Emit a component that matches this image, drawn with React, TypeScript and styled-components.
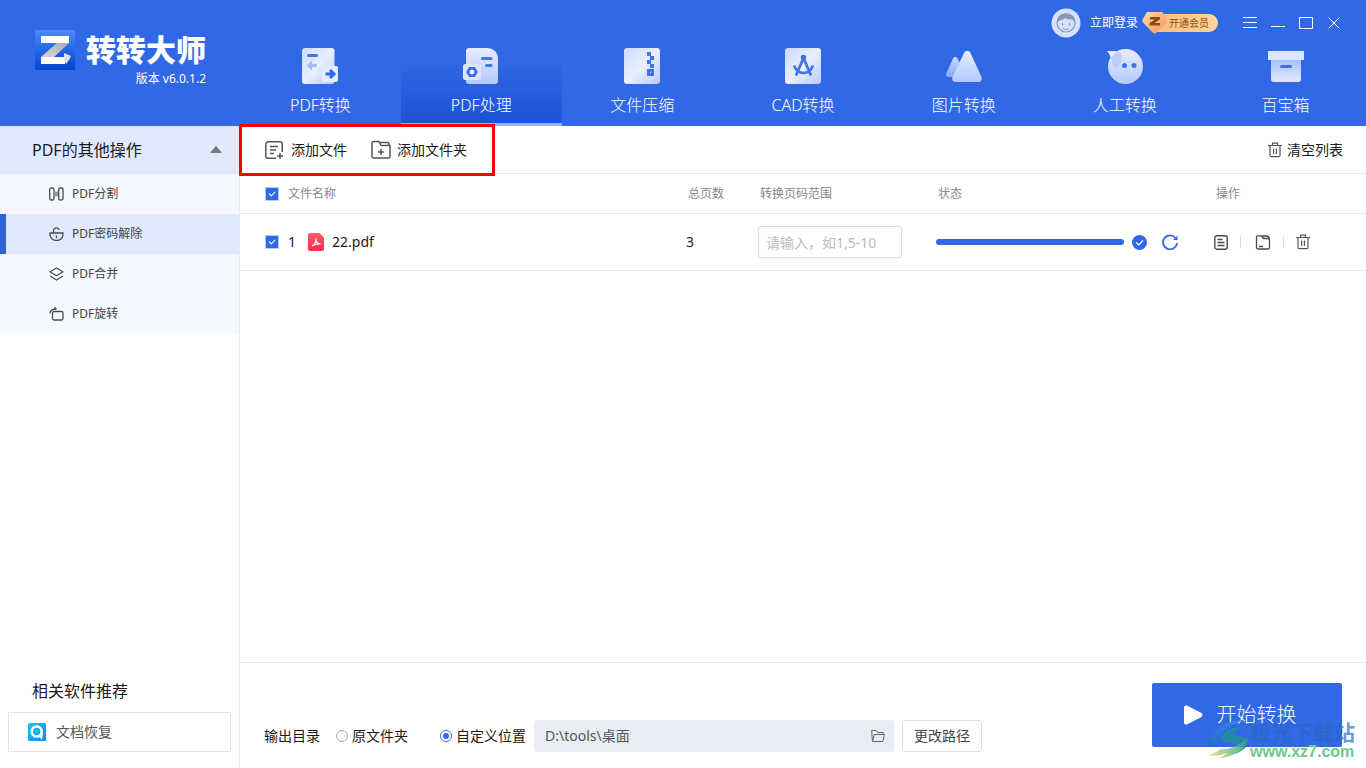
import React, { useState } from "react";
import styled, { createGlobalStyle, css } from "styled-components";

const blue = "#3168e6";
const pale = "#e1e9ff";
const line = "#e4e6ea";
const ink = "#1a1a1a";
const soft = "#555";

const GlobalStyle = createGlobalStyle`
  *, *::before, *::after { box-sizing: border-box; }
  body { margin: 0; background: #fff; }
  body, button, input {
    font-family: "Noto Sans", "Noto Sans CJK SC", sans-serif;
    font-size: 14px;
    line-height: 20px;
    color: ${ink};
  }
  button { padding: 0; border: 0; background: none; cursor: pointer; }
  svg { display: block; flex: none; }
`;

const Page = styled.div`
  position: relative;
  display: flex;
  flex-direction: column;
  min-height: 100vh;
`;

/* Header */
const Header = styled.header`
  display: flex;
  background: ${blue};
  color: #fff;
`;
const Brand = styled.div`
  display: flex;
  flex: none;
  gap: 11px;
  width: 240px;
  padding: 30px 0 0 35px;
`;
const BrandText = styled.div`
  display: flex;
  flex-direction: column;
  align-items: flex-end;
  gap: 5px;
`;
const BrandName = styled.h1`
  margin: 0;
  font-family: "Noto Sans CJK SC", sans-serif;
  font-size: 30px;
  font-weight: 900;
  line-height: 36px;
`;
const Version = styled.span`
  font-size: 12px;
  line-height: 16px;
`;
const HeaderMain = styled.div`
  flex: 1;
  min-width: 0;
`;
const TitleBar = styled.div`
  display: flex;
  align-items: center;
  justify-content: flex-end;
  height: 46px;
  padding-right: 18px;
`;
const Login = styled.button`
  display: flex;
  align-items: center;
  gap: 9px;
  color: #fff;
  font-size: 12px;
`;
const Vip = styled.button`
  display: flex;
  align-items: center;
  margin: 0 18px 0 4px;
  color: #8a4f12;
  font-size: 10px;
`;
const VipLabel = styled.span`
  height: 18px;
  margin-left: -14px;
  padding: 0 9px 0 16px;
  border-radius: 0 9px 9px 0;
  background: linear-gradient(90deg, #f8b978, #ffd79c);
  line-height: 18px;
`;
const WindowButton = styled.button`
  display: grid;
  place-items: center;
  width: 28px;
  height: 28px;
`;
const Nav = styled.nav`
  display: grid;
  grid-template-columns: repeat(7, 1fr);
  height: 80px;
`;
const NavItem = styled.a<{ $active?: boolean }>`
  display: flex;
  flex-direction: column;
  align-items: center;
  gap: 9px;
  padding-top: 2px;
  color: #fff;
  font-size: 16px;
  font-weight: 300;
  line-height: 24px;
  text-decoration: none;
  ${(p) =>
    p.$active &&
    css`
      border-bottom: 3px solid #8fb1f8;
      background: linear-gradient(180deg, ${blue} 12px, #1d52d8 100%);
    `}
`;

/* Sidebar */
const Body = styled.div`
  display: flex;
  flex: 1;
`;
const Sidebar = styled.aside`
  display: flex;
  flex: none;
  flex-direction: column;
  width: 240px;
  border-right: 1px solid ${pale};
`;
const GroupHead = styled.button`
  display: flex;
  align-items: center;
  justify-content: space-between;
  height: 48px;
  padding: 0 17px 0 32px;
  background: ${pale};
  font-size: 16px;
`;
const SideLink = styled.a<{ $active?: boolean }>`
  display: flex;
  align-items: center;
  gap: 8px;
  height: 40px;
  padding-left: 43px;
  border-left: 6px solid ${(p) => (p.$active ? "#2f62d9" : "#f5f8ff")};
  background: ${(p) => (p.$active ? pale : "#f5f8ff")};
  color: #444;
  font-size: 12px;
  text-decoration: none;
`;
const Related = styled.section`
  margin-top: auto;
  padding: 0 8px 16px;
`;
const RelatedTitle = styled.h2`
  margin: 0 0 9px;
  padding-left: 24px;
  font-size: 16px;
  font-weight: 400;
  line-height: 24px;
`;
const RelatedLink = styled.a`
  display: flex;
  align-items: center;
  gap: 10px;
  height: 40px;
  padding-left: 19px;
  border: 1px solid #e1e1e1;
  color: ${soft};
  text-decoration: none;
`;

/* Main area */
const Main = styled.main`
  display: flex;
  flex: 1;
  flex-direction: column;
  min-width: 0;
`;
const Toolbar = styled.div`
  position: relative;
  display: flex;
  align-items: center;
  gap: 24px;
  height: 48px;
  padding: 0 23px 0 25px;
  border-bottom: 1px solid #dfe7f6;
`;
const ToolButton = styled.button<{ $end?: boolean }>`
  display: flex;
  align-items: center;
  gap: ${(p) => (p.$end ? 5 : 6)}px;
  margin-left: ${(p) => (p.$end ? "auto" : 0)};
`;
const Highlight = styled.div`
  position: absolute;
  top: -2px;
  left: -1px;
  width: 256px;
  height: 52px;
  border: 3px solid #fe0000;
  pointer-events: none;
`;
const Table = styled.table`
  width: 100%;
  border-collapse: separate;
  border-spacing: 0;
  table-layout: fixed;
`;
const Th = styled.th<{ $width?: number }>`
  width: ${(p) => (p.$width ? `${p.$width}px` : "auto")};
  height: 40px;
  padding: 0 0 0 2px;
  border-bottom: 1px solid #e6e8ec;
  color: #888;
  font-size: 12px;
  font-weight: 400;
  text-align: left;
`;
const Td = styled.td`
  height: 57px;
  padding: 0;
  border-bottom: 1px solid #e6e8ec;
`;
const NameCell = styled.div<{ $head?: boolean }>`
  display: flex;
  align-items: center;
  padding-left: ${(p) => (p.$head ? 23 : 25)}px;
`;
const Tick = styled.input`
  appearance: none;
  display: grid;
  place-items: center;
  width: 14px;
  height: 14px;
  margin: 0 9px 0 0;
  border: 1px solid #b7cbf8;
  background: #fff;
  &:checked { background: ${blue}; }
  &:checked::after {
    content: "";
    width: 6px;
    height: 4px;
    margin-bottom: 2px;
    border: solid #fff;
    border-width: 0 0 1px 1px;
    transform: rotate(-45deg);
  }
`;
const FileNumber = styled.span`
  width: 20px;
`;
const FileName = styled.span`
  margin-left: 8px;
`;
const RangeInput = styled.input`
  display: block;
  width: 144px;
  height: 32px;
  padding: 0 7px;
  border: 1px solid #dcdee3;
  border-radius: 3px;
  &::placeholder { color: #b9bcc4; opacity: 1; }
`;
const Status = styled.div`
  display: flex;
  align-items: center;
`;
const Progress = styled.div`
  width: 188px;
  height: 6px;
  margin-right: 8px;
  border-radius: 3px;
  background: ${blue};
`;
const IconButton = styled.button`
  display: grid;
  place-items: center;
`;
const Retry = styled(IconButton)`
  margin-left: 15px;
`;
const Actions = styled.div`
  display: flex;
  align-items: center;
  gap: 12px;
`;
const Divider = styled.span`
  width: 1px;
  height: 12px;
  background: #dcdcdc;
`;

/* Footer */
const Footer = styled.footer`
  display: flex;
  align-items: flex-end;
  justify-content: space-between;
  gap: 16px;
  margin-top: auto;
  height: 106px;
  padding: 0 24px 16px;
  border-top: 1px solid ${line};
`;
const Output = styled.div`
  display: flex;
  flex: 1;
  align-items: center;
  min-width: 0;
  white-space: nowrap;
`;
const RadioLabel = styled.label<{ $gap: number }>`
  display: flex;
  align-items: center;
  gap: 4px;
  margin-left: ${(p) => p.$gap}px;
`;
const Radio = styled.input`
  appearance: none;
  display: grid;
  place-items: center;
  width: 12px;
  height: 12px;
  margin: 0;
  border: 1px solid #a9a9a9;
  border-radius: 50%;
  &:checked { border-color: ${blue}; }
  &:checked::after {
    content: "";
    width: 6px;
    height: 6px;
    border-radius: 50%;
    background: ${blue};
  }
`;
const PathField = styled.div`
  display: flex;
  flex: 0 1 360px;
  align-items: center;
  min-width: 0;
  height: 32px;
  margin: 0 8px;
  padding: 0 9px 0 11px;
  border-radius: 4px;
  background: #e9edf5;
`;
const PathInput = styled.input`
  flex: 1;
  min-width: 0;
  padding: 0;
  border: 0;
  background: none;
  color: ${soft};
`;
const ChangeButton = styled.button`
  width: 80px;
  height: 32px;
  border: 1px solid #dcdee3;
  border-radius: 3px;
  color: #444;
`;
const StartButton = styled.button`
  display: flex;
  flex: none;
  align-items: center;
  justify-content: center;
  gap: 14px;
  width: 190px;
  height: 64px;
  margin-bottom: 5px;
  padding-right: 14px;
  border-radius: 2px;
  background: ${blue};
  color: #fff;
  font-size: 20px;
  font-weight: 300;
  line-height: 28px;
`;
const Watermark = styled.div`
  position: absolute;
  right: 11px;
  bottom: 7px;
  display: flex;
  pointer-events: none;
`;
const WatermarkText = styled.div`
  display: flex;
  flex-direction: column;
  color: rgba(36, 104, 190, 0.68);
  font-family: "Noto Sans CJK SC", sans-serif;
  font-size: 21px;
  font-weight: 700;
  line-height: 24px;
`;
const WatermarkSite = styled.span`
  color: #6cc98b;
  font-family: "Liberation Sans", sans-serif;
  font-size: 16px;
  line-height: 18px;
`;

/* Drawings */
const Gradients = () => (
  <svg width="0" height="0" style={{ position: "absolute" }} aria-hidden="true">
    <defs>
      <linearGradient id="sheet" x1="0" y1="0" x2="1" y2="1">
        <stop offset="0" stopColor="#cddafc" />
        <stop offset=".5" stopColor="#e9efff" />
        <stop offset="1" stopColor="#b9cafa" />
      </linearGradient>
      <linearGradient id="drop" x1="0" y1="0" x2="0" y2="1">
        <stop offset="0" stopColor="#e6edff" />
        <stop offset="1" stopColor="#b4c8fc" />
      </linearGradient>
      <linearGradient id="rise" x1="0" y1="0" x2="0" y2="1">
        <stop offset="0" stopColor="#a4befa" />
        <stop offset="1" stopColor="#e2eaff" />
      </linearGradient>
      <linearGradient id="shade" x1="0" y1="0" x2="0" y2="1">
        <stop offset="0" stopColor="#c8d7fe" />
        <stop offset="1" stopColor="#86a8f6" />
      </linearGradient>
      <linearGradient id="logo" x1="0" y1="0" x2="0" y2="1">
        <stop offset="0" stopColor="#4d89fb" />
        <stop offset=".5" stopColor="#2168e8" />
        <stop offset="1" stopColor="#0646cc" />
      </linearGradient>
      <linearGradient id="fold" x1="1" y1="0" x2="0" y2="1">
        <stop offset="0" stopColor="#aaaeb5" />
        <stop offset="1" stopColor="#d6d6d8" />
      </linearGradient>
      <linearGradient id="gem" x1="0" y1="0" x2="1" y2="1">
        <stop offset="0" stopColor="#ffdfa8" />
        <stop offset="1" stopColor="#f88d55" />
      </linearGradient>
      <linearGradient id="pdf" x1="0" y1="0" x2="0" y2="1">
        <stop offset="0" stopColor="#ff5a6b" />
        <stop offset="1" stopColor="#fb2b4c" />
      </linearGradient>
      <linearGradient id="recover" x1="0" y1="0" x2="1" y2="1">
        <stop offset="0" stopColor="#18c8f8" />
        <stop offset="1" stopColor="#0a86f4" />
      </linearGradient>
      <linearGradient id="swirl" x1="0" y1="1" x2="1" y2="0">
        <stop offset="0" stopColor="#1d6fc4" />
        <stop offset="1" stopColor="#3f8fe6" />
      </linearGradient>
      <linearGradient id="swoosh" x1="0" y1="0" x2="1" y2="0">
        <stop offset="0" stopColor="#efe06a" />
        <stop offset=".5" stopColor="#8cc97c" />
        <stop offset="1" stopColor="#2b9f86" />
      </linearGradient>
    </defs>
  </svg>
);

const Logo = () => (
  <svg width="40" height="40" viewBox="0 0 40 40">
    <rect width="40" height="40" rx="1" fill="url(#logo)" />
    <path d="M6 6h28v7H6z" fill="#fff" />
    <path d="M22 13h12L19 27H6z" fill="url(#fold)" />
    <path d="M6 27h24v7H6z" fill="#fff" />
    <path d="M29 23l7 3-2 4-3 4-2-4z" fill="#dcdfe6" />
  </svg>
);

const NavIcon = ({ kind }: { kind: string }) => (
  <svg width="36" height="36" viewBox="0 0 36 36" fill="none">
    {kind === "convert" && (
      <>
        <rect width="32.500" height="36" rx="3" fill="url(#sheet)" />
        <path d="M6.500 7.500h8" stroke="#4175ea" strokeWidth="3" strokeLinecap="round" />
        <path d="M4.500 17.500l5.500-5v3.500h5v3h-5v3.500z" fill="#a3bcf7" />
        <rect x="20" y="18" width="16" height="16" rx="2" fill="#e4edff" />
        <path d="M23.500 26h8M28 22l4 4-4 4" stroke="#3469e6" strokeWidth="3" />
      </>
    )}
    {kind === "process" && (
      <>
        <path d="M6 0h18c7 0 11 5 11 11v22c0 2-1 3-3 3H6c-2 0-3-1-3-3V3c0-2 1-3 3-3z" fill="url(#drop)" />
        <path d="M19.500 10.500h8.500M23.500 17.500h4.500" stroke="#4175ea" strokeWidth="3" strokeLinecap="round" />
        <rect x="0" y="16" width="18" height="16" rx="2" fill="#dce7ff" />
        <path d="M6 19h6l3 5-3 5H6l-3-5z" fill="#3f72e9" />
        <circle cx="9" cy="24" r="2.200" fill="#fff" />
      </>
    )}
    {kind === "zip" && (
      <>
        <rect width="36" height="36" rx="3" fill="url(#sheet)" />
        <path d="M23 4h4v4h-4zM26 8h4v4h-4zM23 12h4v4h-4zM26 16h4v4h-4z" fill="#4173e8" />
        <path d="M24.500 22.500h4v4h-4z" stroke="#4173e8" strokeWidth="3" />
      </>
    )}
    {kind === "cad" && (
      <>
        <rect width="36" height="36" rx="3" fill="url(#sheet)" />
        <circle cx="18.500" cy="9.500" r="2.700" fill="#4173e8" />
        <path d="M18.500 10L11 27.500M18.500 10L26 27.500M9 17.500c2 5 5 7.500 9.500 7.500s7.500-2.500 9.500-7.500" stroke="#4173e8" strokeWidth="2.700" />
      </>
    )}
    {kind === "image" && (
      <>
        <path d="M.5 25L7 10.500c1-2 3.500-2 4.500 0l3 6L7 29H3c-3 0-3.500-2-2.500-4z" fill="url(#shade)" />
        <path d="M6.500 29L18 5c1.500-3 5-3 6.500 0L35.500 29c1 3-.5 5-3 5h-23c-2.500 0-4-2-3-5z" fill="url(#drop)" />
      </>
    )}
    {kind === "human" && (
      <>
        <circle cx="18.500" cy="18.500" r="17.500" fill="url(#drop)" />
        <path d="M0 3c4 1 8-1 12 1 5 2 2 12-1 15-2 2-4 1-5-1-2-6-1-10-6-15z" fill="#bdcefb" />
        <path d="M0 3c4 1 7 0 11 1-4 1-6 4-7 6-1-3-2-5-4-7z" fill="#e8eeff" />
        <circle cx="17.500" cy="17.500" r="2.500" fill="#3f72e9" />
        <circle cx="27" cy="17.500" r="2.500" fill="#3f72e9" />
      </>
    )}
    {kind === "box" && (
      <>
        <path d="M3 11h30v20c0 2-1 3-3 3H6c-2 0-3-1-3-3z" fill="url(#rise)" />
        <path d="M0 3h36v9H0z" fill="#dae5ff" />
        <path d="M13.500 18.500h9" stroke="#3b70e8" strokeWidth="3" strokeLinecap="round" />
      </>
    )}
  </svg>
);

const SideIcon = ({ kind }: { kind: string }) => (
  <svg width="15" height="14" viewBox="0 0 15 14" fill="none" stroke="#4c4c4c" strokeWidth="1.300" strokeLinejoin="round">
    {kind === "split" && (
      <>
        <rect x=".7" y="1" width="4.300" height="12" rx="1.500" />
        <rect x="9.700" y="1" width="4.300" height="12" rx="1.500" />
        <path d="M5.600 4l1.700 1 1.800-1v6l-1.800-1-1.700 1z" fill="#999" stroke="none" />
      </>
    )}
    {kind === "unlock" && (
      <path d="M1 6h13v1.500c0 3-2.500 6-6.500 6S1 10.500 1 7.500zM4.500 6V3.800a3 3 0 0 1 5.800-1M7.500 8.500V11" />
    )}
    {kind === "merge" && <path d="M7.500 1L14 4.800 7.500 8.700 1 4.800zM1 9l6.500 4L14 9" />}
    {kind === "rotate" && (
      <>
        <rect x="3.500" y="4.500" width="10.500" height="8.500" rx="1.500" />
        <path d="M1 6.500C1 3 3 2 7.500 2M5.500.3L7.500 2" />
      </>
    )}
  </svg>
);

const AddFileIcon = () => (
  <svg width="20" height="20" viewBox="1 0 20 20" fill="none" stroke="#555" strokeWidth="1.500">
    <path d="M12 18.200H4A2.200 2.200 0 0 1 1.800 16V4A2.200 2.200 0 0 1 4 1.800h12A2.200 2.200 0 0 1 18.200 4v8M6 6.500h8M6 10h6M6 13.500h4M16 13v6M13 16h6" />
  </svg>
);
const AddFolderIcon = () => (
  <svg width="20" height="20" viewBox="0 0 20 20" fill="none" stroke="#555" strokeWidth="1.500" strokeLinejoin="round">
    <path d="M1 3c0-1 .5-1.500 1.500-1.500H8L10 5.500h9v11c0 1-.5 1.500-1.500 1.500h-15C1.500 18 1 17.500 1 16.500zM8.500 2.500h8c1 0 1.500.5 1.500 1.500v1.500M10 9v6M7 12h6" />
  </svg>
);
const TrashIcon = () => (
  <svg width="14" height="16" viewBox="0 0 14 16" fill="none" stroke="#555" strokeWidth="1.200">
    <path d="M0 3.500h14M4.500 3.300V1.200h5v2.100M2 3.500v10c0 .8.500 1.200 1.200 1.200h7.600c.7 0 1.200-.4 1.200-1.200v-10M5.600 6.500V12M8.400 6.500V12" />
  </svg>
);
const PdfIcon = () => (
  <svg width="16" height="18" viewBox="0 0 16 18">
    <path d="M2 0h9.500L16 4.500V16a2 2 0 0 1-2 2H2a2 2 0 0 1-2-2V2a2 2 0 0 1 2-2z" fill="url(#pdf)" />
    <path d="M4 12.800c2-.5 4-3.300 4-7.300M7.800 6c0 3 2 4.500 4.700 5.200-3-.6-5.500 0-8.500 1.600" stroke="#fff" strokeWidth="1.200" fill="none" />
  </svg>
);

const navItems = [
  ["convert", "PDF转换"],
  ["process", "PDF处理"],
  ["zip", "文件压缩"],
  ["cad", "CAD转换"],
  ["image", "图片转换"],
  ["human", "人工转换"],
  ["box", "百宝箱"],
];
const sideItems = [
  ["split", "PDF分割"],
  ["unlock", "PDF密码解除"],
  ["merge", "PDF合并"],
  ["rotate", "PDF旋转"],
];
const windowButtons = [
  ["菜单", "M0 1.500h14M0 6.500h14M0 11.500h14"],
  ["最小化", "M0 10.500h14"],
  ["最大化", "M.5 1.500h13v11H.5z"],
  ["关闭", "M1.500 1.500l11 11M12.500 1.500l-11 11"],
];

export default function App() {
  const [custom, setCustom] = useState(true);
  return (
    <Page>
      <GlobalStyle />
      <Gradients />
      <Header>
        <Brand>
          <Logo />
          <BrandText>
            <BrandName>转转大师</BrandName>
            <Version>版本 v6.0.1.2</Version>
          </BrandText>
        </Brand>
        <HeaderMain>
          <TitleBar>
            <Login>
              <svg width="30" height="30" viewBox="0 0 30 30" fill="none">
                <circle cx="15" cy="15" r="14.500" fill="#d5e2ff" />
                <circle cx="15" cy="15" r="9" stroke="#8998b8" strokeWidth="1.200" />
                <path d="M6 15c-1-6 4-10 9-9.500 6-.5 10 4 9 9.500-1-2-2-3-3-3.500-3 0-5-.5-7-1.500-2 2-5 2-6 3-1 .5-1.500 1-2 2z" fill="#8998b8" />
                <path d="M11.500 15v2.500M18.500 15v2.500" stroke="#8998b8" strokeWidth="1.300" />
                <path d="M12 20.500c2 1.500 4 1.500 6 0" stroke="#8998b8" />
              </svg>
              立即登录
            </Login>
            <Vip>
              <svg width="25" height="22" viewBox="0 0 25 22" style={{ zIndex: 1 }}>
                <path d="M6 0h13c1 0 2 .5 2.500 1.500l3 7c.5 1 0 2-.7 2.700L14 21c-1 1-2 1-3 0L1 10.500C.3 9.500.2 8.500.7 7.500L4 1.500C4.500.5 5 0 6 0z" fill="url(#gem)" />
                <path d="M8 5h10v2.300L12.500 11H18v2.500H7.500V11L13 7.500H8z" fill="#8a4a14" />
              </svg>
              <VipLabel>开通会员</VipLabel>
            </Vip>
            {windowButtons.map(([label, d]) => (
              <WindowButton key={label} aria-label={label}>
                <svg width="14" height="14" viewBox="0 0 14 14" fill="none" stroke="#fff">
                  <path d={d} />
                </svg>
              </WindowButton>
            ))}
          </TitleBar>
          <Nav>
            {navItems.map(([kind, label]) => (
              <NavItem key={kind} href={`#${kind}`} $active={kind === "process"}>
                <NavIcon kind={kind} />
                {label}
              </NavItem>
            ))}
          </Nav>
        </HeaderMain>
      </Header>
      <Body>
        <Sidebar>
          <GroupHead>
            PDF的其他操作
            <svg width="12" height="8" viewBox="0 0 12 8">
              <path d="M6 0l6 7H0z" fill="#777" />
            </svg>
          </GroupHead>
          {sideItems.map(([kind, label]) => (
            <SideLink key={kind} href={`#${kind}`} $active={kind === "unlock"}>
              <SideIcon kind={kind} />
              {label}
            </SideLink>
          ))}
          <Related>
            <RelatedTitle>相关软件推荐</RelatedTitle>
            <RelatedLink href="#recover">
              <svg width="18" height="18" viewBox="0 0 18 18" fill="none">
                <rect width="18" height="18" rx="1.500" fill="url(#recover)" />
                <circle cx="8.700" cy="8.500" r="5" stroke="#fff" strokeWidth="2.600" />
                <circle cx="8.700" cy="8.500" r="1.800" fill="#36b8fa" />
                <path d="M10 12l5-2-1 7z" fill="#fff" />
              </svg>
              文档恢复
            </RelatedLink>
          </Related>
        </Sidebar>
        <Main>
          <Toolbar>
            <ToolButton><AddFileIcon />添加文件</ToolButton>
            <ToolButton><AddFolderIcon />添加文件夹</ToolButton>
            <ToolButton $end><TrashIcon />清空列表</ToolButton>
            <Highlight />
          </Toolbar>
          <Table>
            <thead>
              <tr>
                <Th>
                  <NameCell $head>
                    <Tick type="checkbox" defaultChecked id="all" />
                    <label htmlFor="all">文件名称</label>
                  </NameCell>
                </Th>
                <Th $width={72}>总页数</Th>
                <Th $width={178}>转换页码范围</Th>
                <Th $width={278}>状态</Th>
                <Th $width={152}>操作</Th>
              </tr>
            </thead>
            <tbody>
              <tr>
                <Td>
                  <NameCell>
                    <Tick type="checkbox" defaultChecked aria-label="22.pdf" />
                    <FileNumber>1</FileNumber>
                    <PdfIcon />
                    <FileName>22.pdf</FileName>
                  </NameCell>
                </Td>
                <Td>3</Td>
                <Td><RangeInput aria-label="转换页码范围" placeholder="请输入，如1,5-10" /></Td>
                <Td>
                  <Status>
                    <Progress role="progressbar" aria-valuenow={100} aria-label="状态" />
                    <svg width="15" height="15" viewBox="0 0 15 15" fill="none">
                      <circle cx="7.500" cy="7.500" r="7.500" fill={blue} />
                      <path d="M4 7.300l2.700 2.700L11 5.500" stroke="#fff" strokeWidth="1.200" />
                    </svg>
                    <Retry aria-label="重试">
                      <svg width="16" height="16" viewBox="0 0 16 16" fill="none">
                        <path d="M13.500 4A7 7 0 1 0 15 9" stroke={blue} strokeWidth="1.800" />
                        <path d="M15.500 1.500V6H11z" fill={blue} />
                      </svg>
                    </Retry>
                  </Status>
                </Td>
                <Td>
                  <Actions>
                    <IconButton aria-label="打开文件">
                      <svg width="14" height="15" viewBox="0 0 14 15" fill="none" stroke="#4a4a4a" strokeWidth="1.400">
                        <rect x=".8" y=".8" width="12.400" height="13.400" rx="2" />
                        <path d="M3.500 4.500h5M3.500 7.500h7M3.500 10.500h7" />
                      </svg>
                    </IconButton>
                    <Divider />
                    <IconButton aria-label="打开文件夹">
                      <svg width="18" height="15" viewBox="-2 0 18 15" fill="none" stroke="#4a4a4a" strokeWidth="1.300" strokeLinejoin="round">
                        <path d="M1.500 2.300c0-.9.600-1.500 1.500-1.500h3.500l2 2.700h4c1.200 0 2 .8 2 2v7c0 .9-.6 1.500-1.500 1.500H3c-.9 0-1.500-.6-1.500-1.500zM7 1h4c2.200 0 3.500 1.500 3.500 4M4 11.500h4" />
                      </svg>
                    </IconButton>
                    <Divider />
                    <IconButton aria-label="删除"><TrashIcon /></IconButton>
                  </Actions>
                </Td>
              </tr>
            </tbody>
          </Table>
          <Footer>
            <Output>
              输出目录
              <RadioLabel $gap={16}>
                <Radio type="radio" name="output" checked={!custom} onChange={() => setCustom(false)} />
                原文件夹
              </RadioLabel>
              <RadioLabel $gap={32}>
                <Radio type="radio" name="output" checked={custom} onChange={() => setCustom(true)} />
                自定义位置
              </RadioLabel>
              <PathField>
                <PathInput readOnly aria-label="输出目录" value={"D:\\tools\\桌面"} />
                <svg width="14" height="14" viewBox="0 0 14 14" fill="none" stroke="#666" strokeLinejoin="round">
                  <path d="M1.500 12.500L.6 1.500h4.600l1.500 2h5.500v2M1.500 12.500h10.300l1.700-7H3.300z" />
                </svg>
              </PathField>
              <ChangeButton>更改路径</ChangeButton>
            </Output>
            <StartButton>
              <svg width="19" height="20" viewBox="0 0 19 20">
                <path d="M0 2.500C0 .5 2 0 3.500.8l13.500 7c2 1.200 2 3.200 0 4.400l-13.500 7C2 20 0 19.500 0 17.500z" fill="#fff" />
              </svg>
              开始转换
            </StartButton>
          </Footer>
        </Main>
      </Body>
      <Watermark>
        <svg width="43" height="42" viewBox="0 0 43 42" opacity=".85">
          <path d="M38 1C22 0 4 10 1 21c-1 6 4 8 10 6C7 17 20 6 38 1z" fill="url(#swirl)" />
          <path d="M14 19C18 10 30 6 41 9c-9 0-15 3-14 6 2 3 14 1 14 8 0 6-8 11-17 13 5-3 9-7 7-10-3-4-16 0-17-7z" fill="#248f98" />
          <path d="M13 30c8 1 20-3 28-12-1 11-13 20-29 21 3-1 6-3 8-5-6 2-12 4-19 2 5-1 9-3 12-6z" fill="url(#swoosh)" />
        </svg>
        <WatermarkText>
          极光下载站
          <WatermarkSite>www.xz7.com</WatermarkSite>
        </WatermarkText>
      </Watermark>
    </Page>
  );
}
